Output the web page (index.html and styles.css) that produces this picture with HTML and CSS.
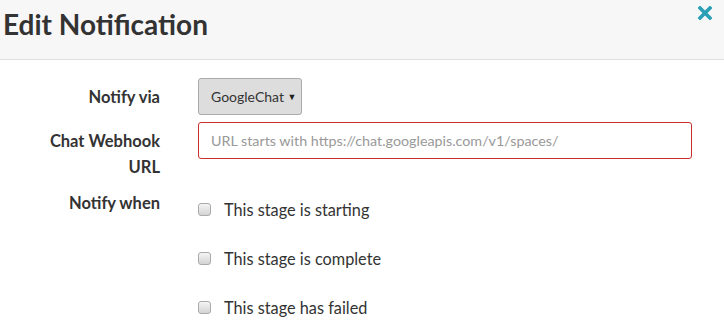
FILE: index.html
```html
<!DOCTYPE html>
<html lang="en">
<head>
    <meta charset="UTF-8">
    <title>Edit Notification</title>
    <link rel="stylesheet" href="styles.css">
</head>
<body>
    <div class="modal">
        <div class="modal-header">
            <h2>Edit Notification</h2>
            <button class="close" aria-label="Close">
                <svg viewBox="0 0 14 14" width="14" height="14">
                    <path d="M2 2 L12 12 M12 2 L2 12" stroke="currentColor" stroke-width="3.6" stroke-linecap="square"/>
                </svg>
            </button>
        </div>
        <form class="modal-body">
            <div class="form-row">
                <label class="form-label">Notify via</label>
                <div class="form-field">
                    <div class="select">GoogleChat <span class="caret">&#9660;</span></div>
                </div>
            </div>
            <div class="form-row">
                <label class="form-label">Chat Webhook<br>URL</label>
                <div class="form-field">
                    <input class="text-input" type="text" placeholder="URL starts with https://chat.googleapis.com/v1/spaces/">
                </div>
            </div>
            <div class="form-row">
                <label class="form-label label-when">Notify when</label>
                <div class="form-field checks">
                    <label class="check"><span class="box"></span>This stage is starting</label>
                    <label class="check"><span class="box"></span>This stage is complete</label>
                    <label class="check"><span class="box"></span>This stage has failed</label>
                </div>
            </div>
        </form>
    </div>
</body>
</html>
```
FILE: styles.css
```css
body {
    margin: 0;
    font-family: Lato, "Noto Sans", sans-serif;
    color: #333;
    background: #fff;
}
.modal-header {
    display: flex;
    justify-content: space-between;
    align-items: flex-start;
    height: 59px;
    background: #f7f7f7;
    border-bottom: 1px solid #e0e0e0;
    padding: 0 12px 0 3px;
}
.modal-header h2 {
    margin: 0;
    font-size: 28px;
    font-weight: bold;
    line-height: 48px;
    color: #333;
}
.close {
    border: 0;
    background: none;
    padding: 0;
    margin-top: 6px;
    color: #2a9fb6;
    cursor: pointer;
}
.close svg {
    display: block;
}
.modal-body {
    padding: 18px 32px 0 0;
}
.form-row {
    display: grid;
    grid-template-columns: 160px 1fr;
    column-gap: 38px;
    margin-bottom: 7px;
}
.form-label {
    text-align: right;
    font-weight: bold;
    font-size: 16.5px;
    line-height: 26px;
    padding-top: 6px;
}
.select {
    display: inline-block;
    height: 35px;
    line-height: 35px;
    padding: 0 5px 0 12px;
    font-size: 14px;
    background: #ddd;
    border: 1px solid #aaa;
    border-radius: 3px;
}
.caret {
    font-size: 9px;
    vertical-align: 2px;
    color: #222;
}
.text-input {
    box-sizing: border-box;
    width: 100%;
    height: 37px;
    padding: 0 12px;
    font-family: inherit;
    font-size: 14.3px;
    border: 1px solid #c9302c;
    border-radius: 3px;
    outline: none;
}
.text-input::placeholder {
    color: #999;
}
.label-when {
    padding-top: 3px;
}
.checks {
    display: flex;
    flex-direction: column;
    gap: 25px;
    padding-top: 10px;
}
.check {
    display: flex;
    align-items: center;
    height: 24px;
    font-size: 16.3px;
}
.box {
    width: 11px;
    height: 11px;
    margin-right: 13px;
    border: 1px solid #aaa;
    border-radius: 3px;
    background: linear-gradient(#f4f4f4, #d4d4d4);
}
```
